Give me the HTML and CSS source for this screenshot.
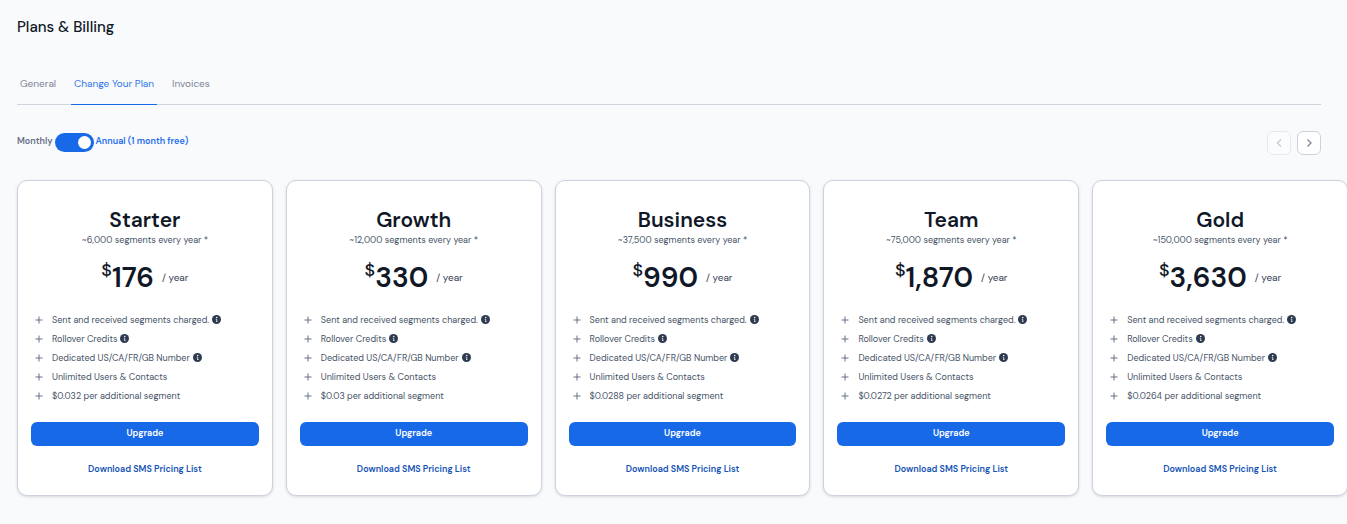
FILE: index.html
```html
<!DOCTYPE html>
<html lang="en">
<head>
    <meta charset="utf-8">
    <meta name="viewport" content="width=device-width, initial-scale=1">
    <title>Plans &amp; Billing</title>
    <link rel="stylesheet" href="styles.css">
</head>
<body>
    <svg class="sprite" aria-hidden="true">
        <symbol id="plus" viewBox="0 0 8 8"><path d="M4 .5v7M.5 4h7" fill="none" stroke="currentColor" stroke-width="1"/></symbol>
        <symbol id="info" viewBox="0 0 18 18">
            <circle cx="9" cy="9" r="9" fill="#2d3a50"/>
            <circle cx="9.5" cy="5" r="1.5" fill="#fff"/>
            <path d="M7.500 8.500h2v4M8 13h3" fill="none" stroke="#fff" stroke-width="1.500"/>
        </symbol>
    </svg>

    <main class="page">
        <h1 class="page-title">Plans &amp; Billing</h1>

        <nav class="tabs">
            <a class="tab" href="#general">General</a>
            <a class="tab active" href="#plan">Change Your Plan</a>
            <a class="tab" href="#invoices">Invoices</a>
        </nav>

        <div class="toolbar">
            <div class="period">
                <span class="period-off">Monthly</span>
                <input class="switch" type="checkbox" id="annual" checked>
                <label class="period-on" for="annual">Annual (1 month free)</label>
            </div>
            <div class="pager">
                <button class="pager-btn" type="button" aria-label="Previous" disabled>
                    <svg viewBox="0 0 12 12"><path d="M8 2.500 4.500 6 8 9.500"/></svg>
                </button>
                <button class="pager-btn" type="button" aria-label="Next">
                    <svg viewBox="0 0 12 12"><path d="M4.500 2.500 8 6 4.500 9.500"/></svg>
                </button>
            </div>
        </div>

        <div class="plans">
            <section class="card">
                <h2 class="name">Starter</h2>
                <p class="segments">~6,000 segments every year *</p>
                <p class="price"><span class="currency">$</span><span class="amount">176</span><span class="per">/ year</span></p>
                <ul class="features">
                    <li><svg class="plus"><use href="#plus"/></svg>Sent and received segments charged.<svg class="info"><use href="#info"/></svg></li>
                    <li><svg class="plus"><use href="#plus"/></svg>Rollover Credits<svg class="info"><use href="#info"/></svg></li>
                    <li><svg class="plus"><use href="#plus"/></svg>Dedicated US/CA/FR/GB Number<svg class="info"><use href="#info"/></svg></li>
                    <li><svg class="plus"><use href="#plus"/></svg>Unlimited Users &amp; Contacts</li>
                    <li><svg class="plus"><use href="#plus"/></svg>$0.032 per additional segment</li>
                </ul>
                <button class="upgrade" type="button">Upgrade</button>
                <a class="download" href="#pricing">Download SMS Pricing List</a>
            </section>

            <section class="card">
                <h2 class="name">Growth</h2>
                <p class="segments">~12,000 segments every year *</p>
                <p class="price"><span class="currency">$</span><span class="amount">330</span><span class="per">/ year</span></p>
                <ul class="features">
                    <li><svg class="plus"><use href="#plus"/></svg>Sent and received segments charged.<svg class="info"><use href="#info"/></svg></li>
                    <li><svg class="plus"><use href="#plus"/></svg>Rollover Credits<svg class="info"><use href="#info"/></svg></li>
                    <li><svg class="plus"><use href="#plus"/></svg>Dedicated US/CA/FR/GB Number<svg class="info"><use href="#info"/></svg></li>
                    <li><svg class="plus"><use href="#plus"/></svg>Unlimited Users &amp; Contacts</li>
                    <li><svg class="plus"><use href="#plus"/></svg>$0.03 per additional segment</li>
                </ul>
                <button class="upgrade" type="button">Upgrade</button>
                <a class="download" href="#pricing">Download SMS Pricing List</a>
            </section>

            <section class="card">
                <h2 class="name">Business</h2>
                <p class="segments">~37,500 segments every year *</p>
                <p class="price"><span class="currency">$</span><span class="amount">990</span><span class="per">/ year</span></p>
                <ul class="features">
                    <li><svg class="plus"><use href="#plus"/></svg>Sent and received segments charged.<svg class="info"><use href="#info"/></svg></li>
                    <li><svg class="plus"><use href="#plus"/></svg>Rollover Credits<svg class="info"><use href="#info"/></svg></li>
                    <li><svg class="plus"><use href="#plus"/></svg>Dedicated US/CA/FR/GB Number<svg class="info"><use href="#info"/></svg></li>
                    <li><svg class="plus"><use href="#plus"/></svg>Unlimited Users &amp; Contacts</li>
                    <li><svg class="plus"><use href="#plus"/></svg>$0.0288 per additional segment</li>
                </ul>
                <button class="upgrade" type="button">Upgrade</button>
                <a class="download" href="#pricing">Download SMS Pricing List</a>
            </section>

            <section class="card">
                <h2 class="name">Team</h2>
                <p class="segments">~75,000 segments every year *</p>
                <p class="price"><span class="currency">$</span><span class="amount">1,870</span><span class="per">/ year</span></p>
                <ul class="features">
                    <li><svg class="plus"><use href="#plus"/></svg>Sent and received segments charged.<svg class="info"><use href="#info"/></svg></li>
                    <li><svg class="plus"><use href="#plus"/></svg>Rollover Credits<svg class="info"><use href="#info"/></svg></li>
                    <li><svg class="plus"><use href="#plus"/></svg>Dedicated US/CA/FR/GB Number<svg class="info"><use href="#info"/></svg></li>
                    <li><svg class="plus"><use href="#plus"/></svg>Unlimited Users &amp; Contacts</li>
                    <li><svg class="plus"><use href="#plus"/></svg>$0.0272 per additional segment</li>
                </ul>
                <button class="upgrade" type="button">Upgrade</button>
                <a class="download" href="#pricing">Download SMS Pricing List</a>
            </section>

            <section class="card">
                <h2 class="name">Gold</h2>
                <p class="segments">~150,000 segments every year *</p>
                <p class="price"><span class="currency">$</span><span class="amount">3,630</span><span class="per">/ year</span></p>
                <ul class="features">
                    <li><svg class="plus"><use href="#plus"/></svg>Sent and received segments charged.<svg class="info"><use href="#info"/></svg></li>
                    <li><svg class="plus"><use href="#plus"/></svg>Rollover Credits<svg class="info"><use href="#info"/></svg></li>
                    <li><svg class="plus"><use href="#plus"/></svg>Dedicated US/CA/FR/GB Number<svg class="info"><use href="#info"/></svg></li>
                    <li><svg class="plus"><use href="#plus"/></svg>Unlimited Users &amp; Contacts</li>
                    <li><svg class="plus"><use href="#plus"/></svg>$0.0264 per additional segment</li>
                </ul>
                <button class="upgrade" type="button">Upgrade</button>
                <a class="download" href="#pricing">Download SMS Pricing List</a>
            </section>
        </div>
    </main>
</body>
</html>
```

FILE: styles.css
```css
* {
    box-sizing: border-box;
}

body {
    margin: 0;
    background: #f9fafc;
    color: #101828;
    font-family: "DM Sans", Inter, "Liberation Sans", sans-serif;
    font-size: 9px;
    overflow-x: hidden;
}

h1, h2, p, ul {
    margin: 0;
    padding: 0;
}

a {
    text-decoration: none;
}

button {
    padding: 0;
    font-family: inherit;
    cursor: pointer;
}

.sprite {
    display: none;
}

.page {
    padding: 17px 26px 27px 17px;
}

.page-title {
    font-size: 15px;
    font-weight: 500;
    line-height: 20px;
}

/* tabs */
.tabs {
    display: flex;
    gap: 12px;
    margin-top: 37px;
    border-bottom: 1px solid #d0d5dd;
}

.tab {
    margin-bottom: -1px;
    padding: 0 3px 10px;
    border-bottom: 1px solid transparent;
    color: #7c8496;
    font-size: 10px;
    line-height: 20px;
}

.tab.active {
    border-bottom-color: #1869e8;
    color: #2f77e8;
}

/* monthly / annual switch and arrows */
.toolbar {
    display: flex;
    justify-content: space-between;
    align-items: flex-start;
    margin-top: 26px;
}

.period {
    display: flex;
    align-items: flex-start;
    gap: 2px;
    padding-top: 2px;
    font-weight: 600;
    line-height: 17px;
}

.period-off {
    color: #667085;
}

.period-on {
    color: #1f6feb;
}

.switch {
    appearance: none;
    display: flex;
    align-items: center;
    width: 39px;
    height: 19px;
    margin: 0;
    padding: 0 3px;
    border-radius: 10px;
    background: #98a2b3;
    cursor: pointer;
}

.switch::before {
    content: "";
    width: 13px;
    height: 13px;
    border-radius: 50%;
    background: #fff;
}

.switch:checked {
    justify-content: flex-end;
    background: #1869e8;
}

.pager {
    display: flex;
    gap: 6px;
}

.pager-btn {
    display: flex;
    align-items: center;
    justify-content: center;
    width: 24px;
    height: 24px;
    border: 1px solid #cdd2dd;
    border-radius: 6px;
    background: #fff;
    color: #7c8496;
}

.pager-btn:disabled {
    opacity: .4;
}

.pager-btn svg {
    width: 12px;
    height: 12px;
    fill: none;
    stroke: currentColor;
    stroke-width: 1.3;
}

/* the last card runs out past the page padding */
.plans {
    display: grid;
    grid-template-columns: repeat(5, 1fr);
    gap: 13px;
    margin: 25px -27px 0 0;
}

.card {
    display: flex;
    flex-direction: column;
    padding: 26px 13px 20px;
    border: 1px solid #cdd2dd;
    border-radius: 10px;
    background: #fff;
    box-shadow: 0 1px 3px rgba(16, 24, 40, .15);
    text-align: center;
}

.name {
    font-size: 21px;
    font-weight: 600;
    line-height: 26px;
}

.segments {
    color: #475467;
    line-height: 14px;
}

.price {
    display: flex;
    justify-content: center;
    align-items: center;
    height: 40px;
    margin-top: 10px;
}

.currency {
    align-self: flex-start;
    font-size: 18px;
    font-weight: 500;
    line-height: 26px;
}

.amount {
    font-size: 28px;
    font-weight: 600;
}

.per {
    margin-left: 8px;
    color: #344054;
    font-size: 10px;
}

.features {
    margin-top: 13px;
    list-style: none;
}

.features li {
    display: flex;
    align-items: center;
    height: 19px;
    color: #475467;
    white-space: nowrap;
}

.plus {
    width: 8px;
    height: 8px;
    margin: 1px 9px 0 4px;
    color: #667085;
}

.info {
    width: 9px;
    height: 9px;
    margin-left: 3px;
}

.upgrade {
    height: 24px;
    margin-top: 17px;
    padding-bottom: 3px;
    border: 0;
    border-radius: 6px;
    background: #1869e8;
    color: #fff;
    font-size: 9px;
    font-weight: 600;
}

.download {
    margin-top: 17px;
    color: #1554b5;
    font-weight: 600;
    line-height: 12px;
}
```
